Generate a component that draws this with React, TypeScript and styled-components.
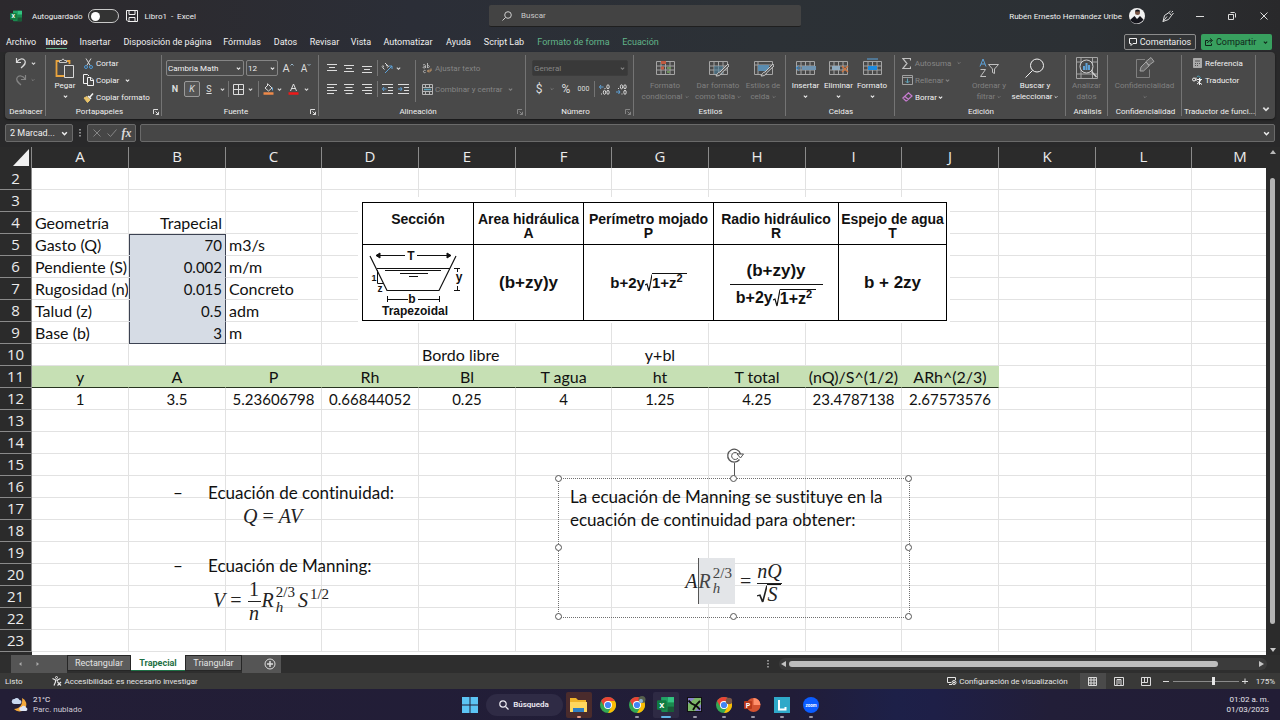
import React from "react";
import styled, { createGlobalStyle, css } from "styled-components";

const UI = `Roboto, "Open Sans", sans-serif`;
const HEADS = `"Open Sans", "Noto Sans", sans-serif`;
const SHEET = `Lato, "Open Sans", sans-serif`;
const MATH = `"Liberation Serif", serif`;
const PICTURE = `"Liberation Sans", Arial, sans-serif`;

const Global = createGlobalStyle`
  * { box-sizing: border-box; }
  body { margin: 0; background: #2b2b2b; font-family: ${UI}; font-size: 8px; color: #f0f0f0; overflow: hidden; }
  button, input, select { font: inherit; color: inherit; margin: 0; padding: 0; border: 0; background: none; }
  button { cursor: pointer; white-space: nowrap; }
  svg { display: block; flex: none; }
`;

/* ---------- shared pieces ---------- */

const Shell = styled.div`
  display: flex;
  flex-direction: column;
  height: 100vh;
`;

type SvgProps = { w: number; h: number; box?: string; children: React.ReactNode };
const Svg = ({ w, h, box, children }: SvgProps) => (
  <svg width={w} height={h} viewBox={box ?? `0 0 ${w} ${h}`} fill="none" stroke="currentColor" strokeWidth="1" aria-hidden="true">
    {children}
  </svg>
);

const Chevron = ({ size = 5 }: { size?: number }) => (
  <svg width={size} height={size} viewBox="0 0 6 6" fill="none" stroke="currentColor" strokeWidth="1.3" aria-hidden="true">
    <path d="M1 2l2 2 2-2" />
  </svg>
);

const IconButton = styled.button<{ $w: number; $h?: number; $boxed?: boolean; $dim?: boolean }>`
  display: flex;
  align-items: center;
  justify-content: center;
  flex: none;
  width: ${(p) => p.$w}px;
  height: ${(p) => p.$h ?? 16}px;
  color: ${(p) => (p.$dim ? "#858585" : "#dcdcdc")};
  ${(p) => p.$boxed && css`border: 1px solid #9a9a9a; border-radius: 2px; background: #555;`}
`;

/* ---------- title bar ---------- */

const TopArea = styled.header`
  flex: none;
  background: linear-gradient(90deg, #2c292d 0%, #2c2b30 14%, #2b2e37 32%, #2c3136 60%, #2c3034 85%, #29292b 100%);
`;

const TitleBar = styled.div`
  display: grid;
  grid-template-columns: 1fr 312px 1fr;
  align-items: center;
  height: 32px;
  padding-left: 10px;
`;

const TitleLeft = styled.div`
  display: flex;
  align-items: center;
`;

const AutoSave = styled.label`
  display: flex;
  align-items: center;
  gap: 5px;
  margin: 0 7px 0 10px;
`;

const Toggle = styled.input`
  appearance: none;
  width: 31px;
  height: 14px;
  border: 1px solid #c8c8c8;
  border-radius: 7px;
  background: #333;
  display: flex;
  align-items: center;
  padding: 0 2px;
  &::before {
    content: "";
    width: 9px;
    height: 9px;
    border-radius: 50%;
    background: #fff;
  }
`;

const DocName = styled.span`
  margin-left: 7px;
`;

const SearchBox = styled.label`
  display: flex;
  align-items: center;
  gap: 9px;
  height: 22px;
  padding-left: 13px;
  border-radius: 2px;
  background: #434343;
  border-bottom: 1px solid #1f1f1f;
  color: #cfcfcf;
`;

const SearchInput = styled.input`
  flex: 1;
  outline: 0;
  &::placeholder { color: #c9c9c9; opacity: 1; }
`;

const TitleRight = styled.div`
  display: flex;
  align-items: center;
  justify-content: flex-end;
`;

const WindowButton = styled(IconButton)`
  height: 32px;
`;

/* ---------- ribbon tabs ---------- */

const TabRow = styled.nav`
  display: flex;
  align-items: center;
  height: 20px;
  padding: 0 8px 0 1px;
`;

const RibbonTab = styled.button<{ $w: number; $active?: boolean; $green?: boolean }>`
  position: relative;
  flex: none;
  width: ${(p) => p.$w}px;
  height: 20px;
  padding-bottom: 1px;
  font-size: 9px;
  text-align: center;
  color: ${(p) => (p.$green ? "#62b489" : "#f0f0f0")};
  font-weight: ${(p) => (p.$active ? 700 : 400)};
  &::after {
    content: "";
    position: absolute;
    display: ${(p) => (p.$active ? "block" : "none")};
    left: 5px;
    right: 5px;
    bottom: 3px;
    height: 1px;
    background: #6bb58f;
  }
`;

const Spacer = styled.div`
  flex: 1;
`;

const CommentsButton = styled.button`
  display: flex;
  align-items: center;
  justify-content: center;
  gap: 3px;
  width: 72px;
  height: 16px;
  margin-right: 5px;
  border: 1px solid #8c8c8c;
  border-radius: 2px;
  background: #333537;
  font-size: 9px;
`;

const ShareButton = styled.button`
  display: flex;
  align-items: center;
  justify-content: center;
  gap: 3px;
  width: 71px;
  height: 16px;
  padding-left: 4px;
  border-radius: 2px;
  background: #38a05f;
  color: #10251a;
  font-size: 9px;
`;

/* ---------- ribbon ---------- */

const RibbonBar = styled.section`
  display: flex;
  flex: none;
  height: 67px;
  margin: 0 5px;
  padding: 3px 0;
  border-radius: 4px;
  background: #494949;
  box-shadow: 0 1px 2px #161616;
`;

const RibbonBack = styled.div`
  flex: none;
  padding-bottom: 5px;
  background: #29292a;
`;

const GroupBox = styled.div<{ $w: number }>`
  display: flex;
  flex-direction: column;
  flex: none;
  width: ${(p) => p.$w}px;
  border-right: 1px solid #747474;
`;

const GroupBody = styled.div<{ $pad?: number }>`
  display: flex;
  height: 51px;
  padding-left: ${(p) => p.$pad ?? 0}px;
`;

const GroupLabel = styled.div`
  display: flex;
  align-items: center;
  justify-content: center;
  height: 10px;
  line-height: 10px;
  padding: 1px 0 0 2px;
  white-space: nowrap;
`;

const LabelText = styled.span`
  flex: 1;
  text-align: center;
`;

const Launcher = ({ dim }: { dim?: boolean }) => (
  <IconButton $w={10} $h={10} $dim={dim} aria-label="Más opciones">
    <Svg w={6} h={6}>
      <path d="M.5 5V.5H5M2.5 2.5l3 3M5.5 2.8v2.7H2.8" />
    </Svg>
  </IconButton>
);

const Group = ({ w, label, pad, launcher, children }: { w: number; label: string; pad?: number; launcher?: "on" | "dim"; children: React.ReactNode }) => (
  <GroupBox $w={w}>
    <GroupBody $pad={pad}>{children}</GroupBody>
    <GroupLabel>
      <LabelText>{label}</LabelText>
      {launcher && <Launcher dim={launcher === "dim"} />}
    </GroupLabel>
  </GroupBox>
);

const Stack = styled.div<{ $w?: number; $two?: boolean }>`
  display: flex;
  flex-direction: column;
  flex: none;
  width: ${(p) => (p.$w ? `${p.$w}px` : "auto")};
  gap: ${(p) => (p.$two ? 5 : 1)}px;
  padding-top: ${(p) => (p.$two ? 5 : 0)}px;
`;

const Row = styled.div<{ $gap?: number }>`
  display: flex;
  align-items: center;
  height: 16px;
  gap: ${(p) => p.$gap ?? 0}px;
`;

const Rule = styled.span<{ $h?: number; $m?: number }>`
  flex: none;
  width: 1px;
  height: ${(p) => p.$h ?? 16}px;
  margin: 0 ${(p) => p.$m ?? 2}px;
  background: #747474;
`;

const LineButton = styled.button<{ $dim?: boolean }>`
  display: flex;
  align-items: center;
  height: 16px;
  gap: 1px;
  color: ${(p) => (p.$dim ? "#858585" : "#f2f2f2")};
`;

const IconSlot = styled.span`
  display: flex;
  align-items: center;
  justify-content: center;
  width: 14px;
`;

const BigButton = styled.button<{ $w: number; $dim?: boolean }>`
  display: flex;
  flex-direction: column;
  align-items: center;
  flex: none;
  width: ${(p) => p.$w}px;
  height: 50px;
  padding-top: 2px;
  line-height: 11px;
  color: ${(p) => (p.$dim ? "#808080" : "#f2f2f2")};
`;

const BigIcon = styled.span`
  display: flex;
  align-items: center;
  justify-content: center;
  height: 22px;
  margin-bottom: 1px;
`;

const BigLine = styled.span`
  display: flex;
  align-items: center;
  gap: 2px;
  height: 11px;
`;

const SelectWrap = styled.span<{ $w: number; $dim?: boolean }>`
  position: relative;
  display: flex;
  align-items: center;
  width: ${(p) => p.$w}px;
  height: 16px;
  border: 1px solid ${(p) => (p.$dim ? "#3d3d3d" : "#858585")};
  border-radius: 2px;
  background: ${(p) => (p.$dim ? "#393939" : "#4a4a4a")};
  color: ${(p) => (p.$dim ? "#858585" : "#f2f2f2")};
  svg { position: absolute; right: 2px; pointer-events: none; }
`;

const Select = styled.select`
  appearance: none;
  width: 100%;
  padding-left: 1px;
  outline: 0;
`;

const Glyph = styled.span<{ $size?: number; $bold?: boolean; $italic?: boolean; $under?: boolean; $serif?: boolean }>`
  font-family: ${(p) => (p.$serif ? MATH : "inherit")};
  font-size: ${(p) => p.$size ?? 9}px;
  font-weight: ${(p) => (p.$bold ? 700 : 400)};
  font-style: ${(p) => (p.$italic ? "italic" : "normal")};
  text-decoration: ${(p) => (p.$under ? "underline" : "none")};
`;

const Lines = ({ d }: { d: string }) => (
  <Svg w={10} h={10}>
    <path d={d} />
  </Svg>
);

const TableIcon = ({ children }: { children?: React.ReactNode }) => (
  <Svg w={21} h={20}>
    <path d="M1.500 3.500h18v13h-18zM1.500 8h18M1.500 12h18M6 3.500v13M10.500 3.500v13M15 3.500v13" stroke="#a5a5a5" />
    {children}
  </Svg>
);

/* ---------- formula bar ---------- */

const FormulaRow = styled.div`
  display: flex;
  flex: none;
  gap: 4px;
  height: 23px;
  padding: 0 5px 5px;
  background: #29292a;
`;

const Field = styled.div<{ $w?: number }>`
  display: flex;
  align-items: center;
  flex: ${(p) => (p.$w ? "none" : 1)};
  width: ${(p) => (p.$w ? `${p.$w}px` : "auto")};
  height: 18px;
  padding: 0 4px;
  border: 1px solid #6a6a6a;
  border-radius: 2px;
  background: #464646;
`;

const FieldInput = styled.input`
  flex: 1;
  min-width: 0;
  outline: 0;
  font-size: 9px;
`;

const Dots = styled.span`
  display: flex;
  align-items: center;
  justify-content: center;
  width: 6px;
  height: 18px;
`;

/* ---------- worksheet ---------- */

const SheetArea = styled.main`
  display: flex;
  flex: 1;
  min-height: 0;
  background: #2b2b2b;
`;

const Canvas = styled.div`
  position: relative;
  flex: 1;
  min-width: 0;
  overflow: hidden;
  background: linear-gradient(90deg, #2b2b2b 32px, #fff 32px);
`;

const Grid = styled.table`
  table-layout: fixed;
  border-collapse: separate;
  border-spacing: 0;
  width: 100%;
  min-width: 1289px;
  font-family: ${SHEET};
  font-variant-ligatures: none;
  color: #111;
`;

const ColHead = styled.th`
  height: 21px;
  padding: 0 0 2px;
  border-right: 1px solid #8a8a8a;
  background: #2b2b2b;
  color: #ececec;
  font: 400 15px/19px ${HEADS};
`;

const Corner = styled.td`
  padding: 0;
  border-right: 1px solid #8a8a8a;
  background: #2b2b2b;
  svg { margin: 0 2px 0 auto; }
`;

const RowHead = styled.th`
  height: 22px;
  padding: 0;
  border-right: 1px solid #8a8a8a;
  border-bottom: 1px solid #8a8a8a;
  background: #2b2b2b;
  color: #ececec;
  font: 400 15px/21px ${HEADS};
`;

type CellKind = { $align?: "left" | "center" | "right"; $num?: boolean; $fill?: "blue" | "green"; $top?: boolean; $bottom?: boolean };
const Cell = styled.td<CellKind>`
  height: 22px;
  padding: ${(p) => (p.$num ? "2px" : "0")} 3px 0;
  overflow: hidden;
  white-space: nowrap;
  text-align: ${(p) => p.$align ?? "left"};
  font-size: ${(p) => (p.$num ? 15 : 16)}px;
  line-height: ${(p) => (p.$num ? 19 : 21)}px;
  border-right: 1px solid #e2e2e2;
  border-bottom: 1px solid #e2e2e2;
  ${(p) => p.$fill === "blue" && css`
    background: #d6dce5;
    border-right-color: #3c4252;
    border-bottom-color: ${p.$bottom ? "#3c4252" : "#d6dce5"};
    box-shadow: inset 1px 0 #3c4252${p.$top ? ", inset 0 1px #3c4252" : ""};
  `}
  ${(p) => p.$fill === "green" && css`
    padding: 0;
    background: #c6e0b4;
    border-right-color: #c6e0b4;
    border-bottom-color: #26331f;
  `}
`;

/* ---------- objects floating over the sheet ---------- */

const Floating = styled.div<{ $x: number; $y: number; $w: number }>`
  position: absolute;
  left: ${(p) => p.$x}px;
  top: ${(p) => p.$y}px;
  width: ${(p) => p.$w}px;
`;

const PictureFrame = styled(Floating)`
  padding: 5px 3px 2px 4px;
  background: #fff;
`;

const FormulaTable = styled.table`
  table-layout: fixed;
  width: 100%;
  border-collapse: collapse;
  font: 700 14px/14px ${PICTURE};
  color: #111;
  th, td { border: 1px solid #000; padding: 0; text-align: center; }
  th { height: 42px; padding-top: 9px; vertical-align: top; white-space: nowrap; }
  td { height: 76px; }
`;

const Expr = styled.span<{ $size?: number }>`
  display: inline-flex;
  align-items: center;
  font-size: ${(p) => p.$size ?? 17}px;
  line-height: 20px;
  white-space: nowrap;
`;

const RootArg = styled.span`
  border-top: 1px solid #111;
  padding-right: 4px;
  line-height: 18px;
  sup { font-size: 11px; line-height: 0; }
`;

const Stacked = styled.span`
  display: inline-flex;
  flex-direction: column;
  align-items: center;
  gap: 3px;
  padding-top: 4px;
`;

const StackedBar = styled.span`
  width: 93px;
  height: 1px;
  background: #111;
`;

const Root = ({ h, color = "#111", w = 7 }: { h: number; color?: string; w?: number }) => (
  <svg width={w} height={h} viewBox="0 0 7 18" preserveAspectRatio="none" fill="none" stroke={color} aria-hidden="true">
    <path d="M0 11l2-1 2 7L7 .5" strokeWidth="1.200" />
  </svg>
);

const NoteText = styled.div`
  color: #111;
  font: 400 17px/23px ${SHEET};
  font-variant-ligatures: none;
  white-space: nowrap;
`;

const NoteList = styled.ul`
  margin: 0;
  padding: 0;
  list-style: none;
`;

const NoteItem = styled.li`
  display: grid;
  grid-template-columns: 35px 1fr;
`;

const MathLine = styled.div<{ $indent?: number; $center?: boolean; $h: number }>`
  display: flex;
  align-items: center;
  justify-content: ${(p) => (p.$center ? "center" : "flex-start")};
  height: ${(p) => p.$h}px;
  padding-left: ${(p) => p.$indent ?? 0}px;
  font: italic 400 20px/22px ${MATH};
  color: #222;
  white-space: pre;
`;

const Fraction = styled.span`
  display: inline-flex;
  flex-direction: column;
  align-items: center;
  margin: 0 1px;
`;

const FractionTop = styled.span<{ $upright?: boolean }>`
  border-bottom: 1px solid #222;
  min-width: 13px;
  text-align: center;
  line-height: 24px;
  font-style: ${(p) => (p.$upright ? "normal" : "italic")};
`;

const Script = styled.span`
  display: inline-flex;
  flex-direction: column;
  margin: 0 3px 0 2px;
  font-size: 15px;
  line-height: 15px;
`;

const Upright = styled.span<{ $size?: number }>`
  font-style: normal;
  font-size: ${(p) => p.$size ?? 20}px;
`;

const Equals = styled(Upright)`
  margin: 0 5px;
`;

const Raised = styled.span`
  align-self: flex-start;
  margin-left: 2px;
  padding-top: 10px;
  font-style: normal;
  font-size: 15px;
  line-height: 14px;
`;

const TextBox = styled(Floating)`
  height: 140px;
  padding: 6px 11px;
  border: 1px dotted #6f6f6f;
`;

const Selected = styled.span`
  display: inline-flex;
  align-items: center;
  height: 46px;
  background: #e3e5e8;
  border-left: 1px solid #555;
  color: #444;
`;

const Handle = styled.span<{ $x: string; $y: string }>`
  position: absolute;
  left: ${(p) => p.$x};
  top: ${(p) => p.$y};
  width: 7px;
  height: 7px;
  margin: -4px;
  border: 1px solid #555;
  border-radius: 50%;
  background: #fff;
`;

const Rotator = styled.span`
  position: absolute;
  left: 167px;
  top: -32px;
`;

const VScroll = styled.div`
  display: flex;
  flex-direction: column;
  align-items: center;
  flex: none;
  width: 14px;
  padding: 1px 0;
  color: #b8b8b8;
`;

const VTrack = styled.div`
  flex: 1;
  width: 100%;
  padding: 22px 5px 22px 4px;
`;

const VThumb = styled.div`
  width: 5px;
  height: 100%;
  border-radius: 3px;
  background: #b5b5b5;
`;

/* ---------- sheet tabs ---------- */

const SheetBar = styled.div`
  display: flex;
  flex: none;
  height: 18px;
  padding-left: 11px;
  background: #2e2e2e;
`;

const SheetNav = styled.div<{ $w: number; $end?: boolean }>`
  display: flex;
  align-items: center;
  justify-content: ${(p) => (p.$end ? "flex-end" : "flex-start")};
  width: ${(p) => p.$w}px;
  background: #555;
`;

const SheetTab = styled.button<{ $w: number; $active?: boolean }>`
  width: ${(p) => p.$w}px;
  height: 16px;
  border: 1px solid #262626;
  background: #5c5c5c;
  color: #e4e4e4;
  font-size: 9px;
  ${(p) => p.$active && css`
    background: #fff;
    border: 0;
    border-bottom: 1px solid #1d7044;
    color: #1d7044;
    font-weight: 700;
  `}
`;

const HScroll = styled.div`
  display: flex;
  align-items: center;
  flex: none;
  width: 488px;
  height: 12px;
  margin: 3px 13px 0 8px;
  border-radius: 6px;
  background: #3b3b3b;
  color: #c4c4c4;
`;

const HTrack = styled.div`
  flex: 1;
  padding-right: 39px;
`;

const HThumb = styled.div`
  height: 6px;
  border-radius: 3px;
  background: #bdbdbd;
`;

/* ---------- status bar ---------- */

const StatusBar = styled.footer`
  display: flex;
  align-items: center;
  flex: none;
  height: 16px;
  padding: 0 5px;
  background: #393938;
  color: #e6e6e6;
`;

const StatusItem = styled.button<{ $after?: number }>`
  display: flex;
  align-items: center;
  gap: 2px;
  height: 16px;
  margin-right: ${(p) => p.$after ?? 0}px;
`;

const ViewButton = styled(IconButton)<{ $on?: boolean }>`
  background: ${(p) => (p.$on ? "#4a4a4a" : "transparent")};
`;

const Zoom = styled.input`
  appearance: none;
  width: 66px;
  height: 10px;
  margin: 0 1px;
  background: linear-gradient(#8a8a8a, #8a8a8a) center / 100% 1px no-repeat;
  &::-webkit-slider-thumb {
    appearance: none;
    width: 3px;
    height: 8px;
    background: #e6e6e6;
  }
`;

/* ---------- taskbar ---------- */

const Taskbar = styled.div`
  display: grid;
  grid-template-columns: 1fr auto 1fr;
  align-items: center;
  flex: none;
  height: 31px;
  padding: 0 11px;
  background: linear-gradient(90deg, #231e36 0%, #211d38 62%, #1d2048 70%, #1e1f47 73%, #221e38 82%, #221d35 100%);
`;

const Weather = styled.button`
  display: flex;
  align-items: center;
  gap: 4px;
  text-align: left;
  line-height: 10px;
  color: #cfcbd6;
`;

const Temp = styled.span`
  display: block;
  color: #f0eef4;
`;

const Apps = styled.div`
  display: flex;
  align-items: center;
  gap: 3px;
`;

const AppButton = styled.button<{ $tint?: string; $mark?: string }>`
  position: relative;
  display: flex;
  align-items: center;
  justify-content: center;
  width: 26px;
  height: 26px;
  border-radius: 2px;
  background: ${(p) => p.$tint ?? "transparent"};
  &::after {
    content: "";
    position: absolute;
    bottom: 0;
    width: ${(p) => (p.$mark === "#62b5e5" ? 10 : 4)}px;
    height: 2px;
    border-radius: 1px;
    background: ${(p) => p.$mark ?? "transparent"};
  }
`;

const TaskSearch = styled.button`
  display: flex;
  align-items: center;
  justify-content: center;
  gap: 4px;
  width: 77px;
  height: 22px;
  border-radius: 11px;
  background: #2f2b45;
  font-weight: 600;
  color: #eceaf2;
`;

const Clock = styled.div`
  text-align: right;
  line-height: 10px;
  color: #e6e4ec;
`;

const Tag = styled.text`
  font-family: ${UI};
  font-weight: 700;
  stroke: none;
`;

/* ---------- logos ---------- */

const ExcelLogo = ({ size }: { size: number }) => (
  <svg width={size} height={size} viewBox="0 0 16 16" aria-hidden="true">
    <rect x="4" y="1" width="12" height="14" rx="1" fill="#1b8a4f" />
    <rect x="10" y="1" width="6" height="5" fill="#33c481" />
    <rect x="4" y="1" width="6" height="5" fill="#21a366" />
    <rect x="10" y="10" width="6" height="5" fill="#185c37" />
    <rect x="0" y="4" width="9" height="9" rx="1" fill="#107c41" />
    <Tag x="4.500" y="11.300" fontSize="7.500" textAnchor="middle" fill="#fff">X</Tag>
  </svg>
);

const ChromeLogo = ({ badge }: { badge?: "photo" | "brown" }) => (
  <svg width="18" height="18" viewBox="0 0 18 18" aria-hidden="true">
    <circle cx="9" cy="9" r="8" fill="#34a853" />
    <path d="M9 5h6.930A8 8 0 0 1 9 17l3.500-6z" fill="#fbbc05" />
    <path d="M2.070 5A8 8 0 0 1 15.930 5H9L5.600 11z" fill="#ea4335" />
    <circle cx="9" cy="9" r="4" fill="#fff" />
    <circle cx="9" cy="9" r="3.100" fill="#4285f4" />
    {badge === "photo" && (
      <g>
        <circle cx="14" cy="3.500" r="3.500" fill="#56604c" />
        <circle cx="13" cy="5" r="2" fill="#8fb7dd" />
      </g>
    )}
    {badge === "brown" && <circle cx="14" cy="5" r="3.200" fill="#7a5848" />}
  </svg>
);

/* ---------- data ---------- */

const letters = ["A", "B", "C", "D", "E", "F", "G", "H", "I", "J", "K", "L", "M"];
const widths = [97, 97, 96, 97, 97, 96, 97, 97, 96, 97, 97, 96];

const tabs: { name: string; w: number; kind?: "active" | "green" }[] = [
  { name: "Archivo", w: 40 },
  { name: "Inicio", w: 31, kind: "active" },
  { name: "Insertar", w: 46 },
  { name: "Disposición de página", w: 99 },
  { name: "Fórmulas", w: 50 },
  { name: "Datos", w: 37 },
  { name: "Revisar", w: 41 },
  { name: "Vista", w: 32 },
  { name: "Automatizar", w: 62 },
  { name: "Ayuda", w: 39 },
  { name: "Script Lab", w: 52 },
  { name: "Formato de forma", w: 87, kind: "green" },
  { name: "Ecuación", w: 47, kind: "green" },
];

const inputs: Record<number, [string, string, string]> = {
  4: ["Geometría", "Trapecial", ""],
  5: ["Gasto (Q)", "70", "m3/s"],
  6: ["Pendiente (S)", "0.002", "m/m"],
  7: ["Rugosidad (n)", "0.015", "Concreto"],
  8: ["Talud (z)", "0.5", "adm"],
  9: ["Base (b)", "3", "m"],
};
const headings = ["y", "A", "P", "Rh", "Bl", "T agua", "ht", "T total", "(nQ)/S^(1/2)", "ARh^(2/3)"];
const results = ["1", "3.5", "5.23606798", "0.66844052", "0.25", "4", "1.25", "4.25", "23.4787138", "2.67573576"];

const renderCell = (row: number, col: number) => {
  if (row === 11 && col < 10) return <Cell key={col} $fill="green" $align="center">{headings[col]}</Cell>;
  if (row === 12 && col < 10) return <Cell key={col} $num $align="center">{results[col]}</Cell>;
  if (row === 10 && col === 4) return <Cell key={col}>Bordo libre</Cell>;
  if (row === 10 && col === 6) return <Cell key={col} $align="center">y+bl</Cell>;
  const data = inputs[row];
  if (data && col < 3) {
    if (col === 1)
      return (
        <Cell key={col} $align="right" $num={row > 4} $fill={row > 4 ? "blue" : undefined} $top={row === 5} $bottom={row === 9}>
          {data[1]}
        </Cell>
      );
    return <Cell key={col}>{data[col]}</Cell>;
  }
  return <Cell key={col} />;
};

/* ---------- sections ---------- */

const Ribbon = () => (
  <RibbonBack>
    <RibbonBar>
      <Group w={41} label="Deshacer" pad={8}>
        <Stack>
          <Row>
            <IconButton $w={16} aria-label="Deshacer">
              <Svg w={12} h={12}><path d="M1.500 1v4.500H6M1.800 5.200C4 1.500 8 1 9.800 3.500S9.500 8 6 11" strokeWidth="1.200" /></Svg>
            </IconButton>
            <IconButton $w={8} aria-label="Opciones de deshacer"><Chevron /></IconButton>
          </Row>
          <Row>
            <IconButton $w={16} $dim aria-label="Rehacer">
              <Svg w={12} h={12}><path d="M10.500 1v4.500H6M10.200 5.200C8 1.500 4 1 2.200 3.500S2.500 8 6 11" strokeWidth="1.200" /></Svg>
            </IconButton>
            <IconButton $w={8} $dim aria-label="Opciones de rehacer"><Chevron size={4} /></IconButton>
          </Row>
        </Stack>
      </Group>

      <Group w={116} label="Portapapeles" pad={3} launcher="on">
        <BigButton $w={32}>
          <BigIcon>
            <Svg w={20} h={21}>
              <path d="M4 3H1.500v15H9M12 3h2.500v3" stroke="#e8a33d" strokeWidth="1.800" />
              <path d="M4.500 4.500v-2h2L8 .8l1.500 1.700h2v2z" stroke="#c8c8c8" />
              <path d="M9.500 7.500h9v12h-9z" stroke="#d8d8d8" fill="#4a4a4a" />
            </Svg>
          </BigIcon>
          <BigLine>Pegar</BigLine>
          <BigLine><Chevron /></BigLine>
        </BigButton>
        <Stack>
          <LineButton>
            <IconSlot>
              <Svg w={9} h={11}>
                <path d="M2 .5l4.200 7M7 .5L2.800 7.500" stroke="#d8d8d8" />
                <circle cx="2" cy="9" r="1.500" stroke="#4f9ad6" />
                <circle cx="7" cy="9" r="1.500" stroke="#4f9ad6" />
              </Svg>
            </IconSlot>
            Cortar
          </LineButton>
          <LineButton>
            <IconSlot>
              <Svg w={11} h={12}>
                <path d="M5 9.500H.5v-9h4l1.500 1.500M4.500 3.500h3.500l2.500 2.500v5.500h-6zM7.500 3.500v3h3" />
              </Svg>
            </IconSlot>
            Copiar
            <IconSlot><Chevron /></IconSlot>
          </LineButton>
          <LineButton>
            <IconSlot>
              <Svg w={11} h={11}>
                <path d="M1 6l3-1.500L7 8l-2.500 2.500z" fill="#e9c46a" stroke="#e9c46a" />
                <path d="M5 4l3 3M6.500 5.500l3.500-4" strokeWidth="1.500" />
              </Svg>
            </IconSlot>
            Copiar formato
          </LineButton>
        </Stack>
      </Group>

      <Group w={157} label="Fuente" pad={4} launcher="on">
        <Stack $two>
          <Row $gap={2}>
            <SelectWrap $w={78}>
              <Select aria-label="Fuente" defaultValue="Cambria Math"><option>Cambria Math</option></Select>
              <Chevron />
            </SelectWrap>
            <SelectWrap $w={32}>
              <Select aria-label="Tamaño de fuente" defaultValue="12"><option>12</option></Select>
              <Chevron />
            </SelectWrap>
            <IconButton $w={16} aria-label="Aumentar tamaño">
              <Glyph $size={11}>A</Glyph>
              <Svg w={4} h={10}><path d="M.5 2.500l1.500-1.500 1.500 1.500" stroke="#9ab8cc" /></Svg>
            </IconButton>
            <IconButton $w={16} aria-label="Reducir tamaño">
              <Glyph $size={10}>A</Glyph>
              <Svg w={4} h={10}><path d="M.5 1l1.500 1.500L3.500 1" stroke="#9ab8cc" /></Svg>
            </IconButton>
          </Row>
          <Row>
            <IconButton $w={18} aria-label="Negrita"><Glyph $bold>N</Glyph></IconButton>
            <IconButton $w={16} $boxed aria-label="Cursiva"><Glyph $italic>K</Glyph></IconButton>
            <IconButton $w={18} aria-label="Subrayado"><Glyph $under>S</Glyph></IconButton>
            <IconButton $w={8} aria-label="Tipos de subrayado"><Chevron /></IconButton>
            <Rule />
            <IconButton $w={14} aria-label="Bordes">
              <Svg w={11} h={11}><path d="M.5.5h10v10H.5zM5.500.5v10M.5 5.500h10" /></Svg>
            </IconButton>
            <IconButton $w={11} aria-label="Tipos de borde"><Chevron /></IconButton>
            <Rule />
            <IconButton $w={14} aria-label="Color de relleno">
              <Svg w={11} h={12}>
                <path d="M2 5l3.500-3.500L9 5 5.500 8z M4.500 2.500V.5" />
                <path d="M9.500 4.500v3" stroke="#6aa8d8" />
                <path d="M.5 10.500h10" stroke="#ef8a4a" strokeWidth="2.500" />
              </Svg>
            </IconButton>
            <IconButton $w={9} aria-label="Colores de relleno"><Chevron /></IconButton>
            <IconButton $w={18} aria-label="Color de fuente">
              <Svg w={11} h={12}>
                <path d="M2.500 8L5.500 1l3 7M3.500 5.500h4" />
                <path d="M.5 10.500h10" stroke="#f01818" strokeWidth="2.500" />
              </Svg>
            </IconButton>
            <IconButton $w={8} aria-label="Colores de fuente"><Chevron /></IconButton>
          </Row>
        </Stack>
      </Group>

      <Group w={207} label="Alineación" pad={4} launcher="dim">
        <Stack $two $w={88}>
          <Row>
            <IconButton $w={17} aria-label="Alinear arriba"><Lines d="M0 1.500h10M2 4.500h6M0 7.500h10" /></IconButton>
            <IconButton $w={18} aria-label="Alinear en el medio"><Lines d="M0 2.500h10M2 5.500h6M0 8.500h10" /></IconButton>
            <IconButton $w={17} aria-label="Alinear abajo"><Lines d="M0 3.500h10M2 6.500h6M0 9.500h10" /></IconButton>
            <Rule />
            <IconButton $w={14} aria-label="Orientación">
              <Svg w={12} h={12}>
                <path d="M4 11l7-7M8 4h3v3" stroke="#5fa2d8" />
                <path d="M1.500 5.500l2 2M1 4.500c1-1.500 2-.5 1 1M4 1l3.500 3.500M5 4c1.500-1.500 3 0 1.500 1.500" />
              </Svg>
            </IconButton>
            <IconButton $w={8} aria-label="Opciones de orientación"><Chevron /></IconButton>
          </Row>
          <Row>
            <IconButton $w={17} aria-label="Alinear a la izquierda"><Lines d="M0 .5h10M0 3.500h7M0 6.500h10M0 9.500h7" /></IconButton>
            <IconButton $w={18} aria-label="Centrar"><Lines d="M0 .5h10M1.500 3.500h7M0 6.500h10M1.500 9.500h7" /></IconButton>
            <IconButton $w={17} aria-label="Alinear a la derecha"><Lines d="M0 .5h10M3 3.500h7M0 6.500h10M3 9.500h7" /></IconButton>
            <Rule />
            <IconButton $w={15} aria-label="Disminuir sangría">
              <Svg w={11} h={10}><path d="M0 .5h11M6 3.500h5M6 6.500h5M0 9.500h11" /><path d="M4.500 5H.5M2 3L.5 5 2 7" stroke="#5fa2d8" /></Svg>
            </IconButton>
            <IconButton $w={16} aria-label="Aumentar sangría">
              <Svg w={11} h={10}><path d="M0 .5h11M6 3.500h5M6 6.500h5M0 9.500h11" /><path d="M0 5h4M2.500 3L4 5 2.500 7" stroke="#5fa2d8" /></Svg>
            </IconButton>
          </Row>
        </Stack>
        <Stack $two><Rule $h={42} $m={4} /></Stack>
        <Stack $two>
          <LineButton $dim>
            <IconSlot>
              <Svg w={10} h={11}>
                <path d="M1 2c1.500-.8 2.500-.3 2.500.8V5M3.500 3.500c-3 0-3 1.700-1.200 1.500L3.500 4.300M5.500 0v5M5.500 2.800c2-1.200 3 2.200 0 1.800M3.500 7.500C1 6.500.5 10.500 3.500 9.500" stroke="#b5b5b5" />
                <path d="M9 5.500v2.500H5.500M7 6.500L5.500 8 7 9.500" stroke="#c99a6a" />
              </Svg>
            </IconSlot>
            Ajustar texto
          </LineButton>
          <LineButton $dim>
            <IconSlot>
              <Svg w={11} h={11}>
                <path d="M.5.5h10v10H.5zM.5 3.500h10M.5 7.500h10M3.500.5v3M7.500.5v3M3.500 7.500v3M7.500 7.500v3" stroke="#b5b5b5" />
                <path d="M2 5.500h7" stroke="#5fa2b8" strokeWidth="1.500" />
              </Svg>
            </IconSlot>
            Combinar y centrar
            <IconSlot><Chevron /></IconSlot>
          </LineButton>
        </Stack>
      </Group>

      <Group w={108} label="Número" pad={6} launcher="dim">
        <Stack $two>
          <SelectWrap $w={96} $dim>
            <Select aria-label="Formato de número" defaultValue="General"><option>General</option></Select>
            <Chevron />
          </SelectWrap>
          <Row>
            <IconButton $w={14} aria-label="Moneda"><Glyph $size={12}>$</Glyph></IconButton>
            <IconButton $w={11} $dim aria-label="Opciones de moneda"><Chevron size={4} /></IconButton>
            <IconButton $w={18} aria-label="Porcentaje"><Glyph $size={12}>%</Glyph></IconButton>
            <IconButton $w={17} aria-label="Estilo millares"><Glyph $size={7}>000</Glyph></IconButton>
            <Rule />
            <IconButton $w={14} aria-label="Aumentar decimales">
              <Svg w={11} h={11}>
                <path d="M4.500 3H.5M2 1L.5 3 2 5" stroke="#5fa2d8" />
                <path d="M6 4v1M2.500 9.500v1" />
                <ellipse cx="9" cy="2.800" rx="1.200" ry="2" />
                <ellipse cx="5.500" cy="8.300" rx="1.200" ry="2" />
                <ellipse cx="9" cy="8.300" rx="1.200" ry="2" />
              </Svg>
            </IconButton>
            <IconButton $w={20} aria-label="Disminuir decimales">
              <Svg w={11} h={11}>
                <path d="M2.500 4v1M6 9.500v1" />
                <ellipse cx="5.500" cy="2.800" rx="1.200" ry="2" />
                <ellipse cx="9" cy="2.800" rx="1.200" ry="2" />
                <ellipse cx="9" cy="8.300" rx="1.200" ry="2" />
                <path d="M0 8h4M2.500 6L4 8l-1.500 2" stroke="#5fa2d8" />
              </Svg>
            </IconButton>
          </Row>
        </Stack>
      </Group>

      <Group w={152} label="Estilos" pad={4}>
        <BigButton $w={54} $dim>
          <BigIcon>
            <TableIcon>
              <path d="M6 4.500h5M6 10h3" stroke="#c05a40" strokeWidth="3" />
              <path d="M12 10h4M12 14h3" stroke="#6d8f5c" strokeWidth="2" />
            </TableIcon>
          </BigIcon>
          <BigLine>Formato</BigLine>
          <BigLine>condicional <Chevron size={4} /></BigLine>
        </BigButton>
        <BigButton $w={52} $dim>
          <BigIcon>
            <TableIcon>
              <path d="M6 8h9v8H6z" fill="#4c7f99" stroke="none" opacity=".6" />
              <path d="M20 6l-8 8c-2 0-3 2-4 4 3 0 5-1 5.500-3L21 8z" fill="#555" stroke="#c8c8c8" />
            </TableIcon>
          </BigIcon>
          <BigLine>Dar formato</BigLine>
          <BigLine>como tabla <Chevron size={4} /></BigLine>
        </BigButton>
        <BigButton $w={38} $dim>
          <BigIcon>
            <Svg w={21} h={20}>
              <path d="M1.500 3.500h18v13h-18zM1.500 7h18M5 3.500v13" stroke="#a5a5a5" />
              <path d="M5 7h11v6H5z" fill="#5a8cb0" stroke="none" />
              <path d="M20 6l-8 8c-2 0-3 2-4 4 3 0 5-1 5.500-3L21 8z" fill="#555" stroke="#c8c8c8" />
            </Svg>
          </BigIcon>
          <BigLine>Estilos de</BigLine>
          <BigLine>celda <Chevron size={4} /></BigLine>
        </BigButton>
      </Group>

      <Group w={109} label="Celdas" pad={3}>
        <BigButton $w={33}>
          <BigIcon>
            <TableIcon>
              <path d="M7 8h14v4H7z" fill="#6f93b0" stroke="none" />
              <path d="M6 10H1M3.500 7.500L1 10l2.500 2.500" stroke="#4e9ad8" />
            </TableIcon>
          </BigIcon>
          <BigLine>Insertar</BigLine>
          <BigLine><Chevron /></BigLine>
        </BigButton>
        <BigButton $w={33}>
          <BigIcon>
            <TableIcon>
              <path d="M4 8h8v4H4z" fill="#8fabc0" stroke="none" />
              <path d="M14 8l6 6M20 8l-6 6" stroke="#d0753f" strokeWidth="1.300" />
            </TableIcon>
          </BigIcon>
          <BigLine>Eliminar</BigLine>
          <BigLine><Chevron /></BigLine>
        </BigButton>
        <BigButton $w={34}>
          <BigIcon>
            <TableIcon>
              <path d="M6 8h9v4H6z" fill="#1d8be0" stroke="none" />
              <path d="M5 1h11" stroke="#5aa5df" />
            </TableIcon>
          </BigIcon>
          <BigLine>Formato</BigLine>
          <BigLine><Chevron /></BigLine>
        </BigButton>
      </Group>

      <Group w={171} label="Edición" pad={5}>
        <Stack $w={66}>
          <LineButton $dim>
            <IconSlot><Svg w={9} h={11}><path d="M8.500 2.500v-2H.8L5 5.500.8 10.500h7.700v-2" stroke="#c0c0c0" strokeWidth="1.200" /></Svg></IconSlot>
            Autosuma
            <IconSlot><Chevron size={4} /></IconSlot>
          </LineButton>
          <LineButton $dim>
            <IconSlot><Svg w={11} h={10}><path d="M.5.5h10v9H.5zM.5 2.500h10" stroke="#a0a0a0" /><path d="M5.500 3.500v4.500M3.500 6l2 2 2-2" stroke="#5fa2b8" /></Svg></IconSlot>
            Rellenar
            <Chevron />
          </LineButton>
          <LineButton>
            <IconSlot><Svg w={11} h={10}><path d="M4 9L.8 6 6.500.8 10 4 4.500 9zM2.800 4.200L6.500 7.500" stroke="#c77bd0" strokeWidth="1.200" /></Svg></IconSlot>
            Borrar
            <Chevron />
          </LineButton>
        </Stack>
        <BigButton $w={46} $dim>
          <BigIcon>
            <Svg w={20} h={20}>
              <path d="M1 8.500l3-7.500 3 7.500M2 6h4" stroke="#5fa2d8" />
              <path d="M1.500 11.500h5l-5 7h5.500" stroke="#c0c0c0" />
              <path d="M9.500 6.500h10l-4 4.500v4.500l-2-1V11z" stroke="#c0c0c0" />
            </Svg>
          </BigIcon>
          <BigLine>Ordenar y</BigLine>
          <BigLine>filtrar <Chevron size={4} /></BigLine>
        </BigButton>
        <BigButton $w={46}>
          <BigIcon><Svg w={20} h={20}><circle cx="12" cy="7.500" r="6.500" /><path d="M7.500 12.500L.5 19.500" /></Svg></BigIcon>
          <BigLine>Buscar y</BigLine>
          <BigLine>seleccionar <Chevron size={4} /></BigLine>
        </BigButton>
      </Group>

      <Group w={42} label="Análisis">
        <BigButton $w={41} $dim>
          <BigIcon>
            <Svg w={22} h={22}>
              <path d="M.5.5h21v21H.5zM.5 5h21M.5 17h21M5 .5v21M16.500.5v21" stroke="#a5a5a5" />
              <circle cx="10.500" cy="9.500" r="6.500" fill="#4a4a4a" stroke="#d0d0d0" />
              <path d="M8 13V9M10.500 13V6M13 13V8" stroke="#5fa2d8" strokeWidth="2" />
              <path d="M15.500 14.500l5 5.500" stroke="#d0d0d0" strokeWidth="1.500" />
            </Svg>
          </BigIcon>
          <BigLine>Analizar</BigLine>
          <BigLine>datos</BigLine>
        </BigButton>
      </Group>

      <Group w={74} label="Confidencialidad">
        <BigButton $w={73} $dim>
          <BigIcon>
            <Svg w={20} h={22}>
              <path d="M10 2.500H1.500v18h13v-8" />
              <path d="M11 4.500l5-4 3 4-5.500 4zM6 10l5-5 3.500 3.500-6 5.500H5z" stroke="#a5a5a5" fill="#666" />
            </Svg>
          </BigIcon>
          <BigLine>Confidencialidad</BigLine>
          <BigLine><Chevron size={4} /></BigLine>
        </BigButton>
      </Group>

      <Group w={74} label="Traductor de funci..." pad={8}>
        <Stack>
          <LineButton>
            <IconSlot><Svg w={9} h={10}><path d="M.5.5h8v9h-8z" fill="#aaa" stroke="#aaa" /><path d="M2 3h5M2 5.500h1M4 5.500h1M6 5.500h1M2 7.500h1M4 7.500h1" stroke="#555" /></Svg></IconSlot>
            Referencia
          </LineButton>
          <LineButton>
            <IconSlot>
              <Svg w={11} h={11}>
                <circle cx="2" cy="4.500" r="1.500" />
                <path d="M4 2.500V6" />
                <path d="M5 1.500c2-1 3 0 3.500 2" stroke="#4aa0b8" />
                <path d="M5 4.500h5M7.500 3v7M5 9c2-1 3-2.500 4-4.500M5.500 6.500l4.500 3" />
              </Svg>
            </IconSlot>
            Traductor
          </LineButton>
        </Stack>
      </Group>
      <Spacer />
      <Stack>
        <Spacer />
        <IconButton $w={20} $h={14} aria-label="Contraer cinta"><Chevron size={8} /></IconButton>
      </Stack>
    </RibbonBar>
  </RibbonBack>
);

const TrapezoidFigure = () => (
  <svg width="108" height="74" viewBox="363 245 108 74" fill="none" stroke="#111" role="img" aria-label="Sección trapezoidal">
    <path d="M370 255l17 34.500h52L456 255M377 267.500h73M385 269.500h56M400 272.500h28M409 275.500h9" strokeWidth="1.200" />
    <path d="M376 254.500h29M417 254.500h34M377.500 269v13.500h6" />
    <path d="M380 252l-4 2.500 4 2.500zM447 252l4 2.500-4 2.500z" fill="#111" />
    <path d="M454 267.500h6M457.500 268v3M454 289.500h6M457.500 285v4M387 298.500h21M418 298.500h21M387.500 295v6M439.500 295v6" />
    <g fill="#111" stroke="none" fontFamily="Liberation Sans" fontWeight="700" fontSize="12" textAnchor="middle">
      <text x="411" y="259">T</text>
      <text x="459" y="280">y</text>
      <text x="374" y="280" fontSize="9">1</text>
      <text x="380" y="291" fontSize="10">z</text>
      <text x="412" y="302">b</text>
      <text x="415" y="314">Trapezoidal</text>
    </g>
  </svg>
);

const Worksheet = () => (
  <SheetArea>
    <Canvas>
      <Grid>
        <colgroup>
          <col width={32} />
          {widths.map((w, i) => <col key={i} width={w} />)}
          <col />
        </colgroup>
        <thead>
          <tr>
            <Corner><svg width="16" height="17" viewBox="0 0 16 17" aria-hidden="true"><path d="M16 0v17H0z" fill="#f0f0f0" /></svg></Corner>
            {letters.map((l) => <ColHead key={l} scope="col">{l}</ColHead>)}
          </tr>
        </thead>
        <tbody>
          {Array.from({ length: 22 }, (_, i) => i + 2).map((row) => (
            <tr key={row}>
              <RowHead scope="row">{row}</RowHead>
              {letters.map((_, col) => renderCell(row, col))}
            </tr>
          ))}
        </tbody>
      </Grid>

      <PictureFrame $x={358} $y={50} $w={592}>
        <FormulaTable>
          <colgroup><col width={111} /><col width={110} /><col width={130} /><col width={125} /><col /></colgroup>
          <thead>
            <tr>
              <th>Sección</th>
              <th>Area hidráulica<br />A</th>
              <th>Perímetro mojado<br />P</th>
              <th>Radio hidráulico<br />R</th>
              <th>Espejo de agua<br />T</th>
            </tr>
          </thead>
          <tbody>
            <tr>
              <td><TrapezoidFigure /></td>
              <td><Expr>(b+zy)y</Expr></td>
              <td><Expr $size={15}>b+2y<Root h={18} /><RootArg>1+z<sup>2</sup></RootArg></Expr></td>
              <td>
                <Stacked>
                  <Expr>(b+zy)y</Expr>
                  <StackedBar />
                  <Expr $size={16}>b+2y<Root h={18} /><RootArg>1+z<sup>2</sup></RootArg></Expr>
                </Stacked>
              </td>
              <td><Expr>b + 2zy</Expr></td>
            </tr>
          </tbody>
        </FormulaTable>
      </PictureFrame>

      <Floating $x={173} $y={334} $w={240}>
        <NoteText>
          <NoteList>
            <NoteItem><span>–</span><span>Ecuación de continuidad:</span></NoteItem>
          </NoteList>
          <MathLine $h={23} $indent={70}>Q<Equals>=</Equals>AV</MathLine>
          <MathLine $h={27}> </MathLine>
          <NoteList>
            <NoteItem><span>–</span><span>Ecuación de Manning:</span></NoteItem>
          </NoteList>
          <MathLine $h={46} $indent={40}>
            V<Equals>=</Equals>
            <Fraction><FractionTop $upright>1</FractionTop>n</Fraction>
            R<Script><Upright $size={15}>2/3</Upright><span>h</span></Script>
            S<Raised>1/2</Raised>
          </MathLine>
        </NoteText>
      </Floating>

      <TextBox $x={558} $y={331} $w={352}>
        <NoteText>
          La ecuación de Manning se sustituye en la<br />
          ecuación de continuidad para obtener:
        </NoteText>
        <MathLine $h={27}> </MathLine>
        <MathLine $h={46} $center>
          A
          <Selected>R<Script><Upright $size={15}>2/3</Upright><span>h</span></Script></Selected>
          <Equals>=</Equals>
          <Fraction>
            <FractionTop>nQ</FractionTop>
            <Expr $size={20}><Root h={18} w={10} color="#222" /><RootArg>S</RootArg></Expr>
          </Fraction>
        </MathLine>
        <Rotator>
          <svg width="18" height="32" viewBox="0 0 18 32" fill="none" stroke="#555" aria-hidden="true">
            <path d="M8.500 16v13" />
            <path d="M13.500 12.500A6.500 6.500 0 1 1 14.500 7" strokeWidth="1.300" />
            <path d="M12 11a3.500 3.500 0 1 1 .5-3" />
            <path d="M11 7h6.500L14.500 11z" fill="#fff" />
          </svg>
        </Rotator>
        {["0%", "50%", "100%"].flatMap((x) =>
          ["0%", "50%", "100%"].filter((y) => x !== "50%" || y !== "50%").map((y) => <Handle key={x + y} $x={x} $y={y} />)
        )}
      </TextBox>
    </Canvas>
    <VScroll>
      <Svg w={8} h={8}><path d="M4 2l3 4H1z" fill="#b8b8b8" stroke="none" /></Svg>
      <VTrack><VThumb /></VTrack>
      <Svg w={8} h={8}><path d="M4 6l3-4H1z" fill="#c8c8c8" stroke="none" /></Svg>
    </VScroll>
  </SheetArea>
);

const Bottom = () => (
  <>
    <SheetBar>
      <SheetNav $w={56}>
        <IconButton $w={18} aria-label="Hoja anterior"><Svg w={4} h={6}><path d="M3.500 1L1 3l2.500 2z" fill="#aaa" stroke="none" /></Svg></IconButton>
        <IconButton $w={18} aria-label="Hoja siguiente"><Svg w={4} h={6}><path d="M.5 1L3 3 .5 5z" fill="#aaa" stroke="none" /></Svg></IconButton>
      </SheetNav>
      <SheetTab $w={64}>Rectangular</SheetTab>
      <SheetTab $w={54} $active>Trapecial</SheetTab>
      <SheetTab $w={57}>Triangular</SheetTab>
      <SheetNav $w={39} $end>
        <IconButton $w={22} aria-label="Hoja nueva"><Svg w={12} h={12}><circle cx="6" cy="6" r="5" /><path d="M6 3v6M3 6h6" strokeWidth="1.500" /></Svg></IconButton>
      </SheetNav>
      <Spacer />
      <Dots><Svg w={2} h={8}><path d="M1 0v8" strokeDasharray="1.500 1.500" /></Svg></Dots>
      <HScroll>
        <Svg w={10} h={8}><path d="M7 1v6L2 4z" fill="#c4c4c4" stroke="none" /></Svg>
        <HTrack><HThumb /></HTrack>
        <Svg w={10} h={8}><path d="M2 1v6l5-3z" fill="#c4c4c4" stroke="none" /></Svg>
      </HScroll>
    </SheetBar>

    <StatusBar>
      <StatusItem $after={30}>Listo</StatusItem>
      <StatusItem>
        <Svg w={10} h={10}>
          <circle cx="4.500" cy="1.500" r="1" />
          <path d="M.5 2.500l3 1.500h2l3-1.500M3.500 4v2L2 9.500M5.500 4v1.500M5.500 6l3.500 3.500M9 6L5.500 9.500" strokeWidth="1.200" />
        </Svg>
        Accesibilidad: es necesario investigar
      </StatusItem>
      <Spacer />
      <StatusItem $after={12}>
        <Svg w={10} h={10}><path d="M4 6.500H.5v-5h8V4M2 8.500h3" /><circle cx="7" cy="6.500" r="2" /><path d="M7 5.500v2M6 6.500h2" /></Svg>
        Configuración de visualización
      </StatusItem>
      <ViewButton $w={26} $on aria-label="Normal"><Svg w={9} h={9}><path d="M.5.5h8v8h-8zM.5 3h8M.5 6h8M3 .5v8M6 .5v8" /></Svg></ViewButton>
      <ViewButton $w={27} aria-label="Diseño de página"><Svg w={10} h={9}><path d="M.5.5h9v8h-9zM3 2.500h4v6H3zM4 4h2M4 6h2" /></Svg></ViewButton>
      <ViewButton $w={27} aria-label="Vista previa de salto de página"><Svg w={10} h={9}><path d="M.5.5h9v8h-9zM3.500.5v5M6.500.5v5M.5 5.500h6" /></Svg></ViewButton>
      <IconButton $w={12} aria-label="Alejar"><Svg w={6} h={6}><path d="M0 3.500h6" /></Svg></IconButton>
      <Zoom type="range" min={10} max={400} defaultValue={252} aria-label="Zoom" />
      <StatusItem as="span" $after={6}>
        <IconButton $w={10} aria-label="Acercar"><Svg w={6} h={6}><path d="M0 3.500h6M3 .5v6" /></Svg></IconButton>
      </StatusItem>
      <StatusItem>175%</StatusItem>
    </StatusBar>

    <Taskbar>
      <Weather>
        <svg width="18" height="18" viewBox="0 0 18 18" aria-hidden="true">
          <path d="M11 2a7 7 0 1 1-8 11c6 0 9-5 8-11z" fill="#f3a83a" />
          <path d="M3 8a2.500 2.500 0 0 1 .5-5 3 3 0 0 1 5 1 2 2 0 0 1 0 4z" fill="#c9d8f0" />
          <path d="M10 15a2 2 0 0 1 .5-4 2.500 2.500 0 0 1 4.500.5 1.800 1.800 0 0 1 0 3.500z" fill="#dfe6f5" />
        </svg>
        <span><Temp>21°C</Temp>Parc. nublado</span>
      </Weather>
      <Apps>
        <AppButton aria-label="Inicio">
          <svg width="16" height="16" viewBox="0 0 16 16" aria-hidden="true"><path d="M0 0h7.500v7.500H0zM8.500 0H16v7.500H8.500zM0 8.500h7.500V16H0zM8.500 8.500H16V16H8.500z" fill="#5cc4f4" /></svg>
        </AppButton>
        <TaskSearch>
          <Svg w={10} h={10}><circle cx="4" cy="4" r="3.200" strokeWidth="1.200" /><path d="M6.500 6.500L9.500 9.500" strokeWidth="1.300" /></Svg>
          Búsqueda
        </TaskSearch>
        <AppButton $tint="#4a2b2c" $mark="#e8a08a" aria-label="Explorador">
          <svg width="17" height="16" viewBox="0 0 17 16" aria-hidden="true">
            <path d="M0 1h6l2 2h8v12H0z" fill="#f0b429" /><path d="M0 5h17v10H0z" fill="#ffd75e" /><path d="M3 11h11v4H3z" fill="#2f7fc4" />
          </svg>
        </AppButton>
        <AppButton aria-label="Chrome"><ChromeLogo /></AppButton>
        <AppButton $mark="#9a98a8" aria-label="Chrome, perfil 1"><ChromeLogo badge="photo" /></AppButton>
        <AppButton $tint="#2e2a44" $mark="#62b5e5" aria-label="Excel"><ExcelLogo size={17} /></AppButton>
        <AppButton $mark="#9a98a8" aria-label="Editor">
          <svg width="15" height="15" viewBox="0 0 15 15" aria-hidden="true">
            <rect x=".5" y=".5" width="14" height="14" fill="#7cb868" stroke="#111" />
            <path d="M1 1h7L1 7zM8 14h6V7z" fill="#8a80cc" />
            <path d="M1.500 3.500l3 3 5 2.500 3.500 3.500M13 4l-4 4-3 5" stroke="#0c0c0c" strokeWidth="1.800" fill="none" />
          </svg>
        </AppButton>
        <AppButton $mark="#9a98a8" aria-label="Chrome, perfil 2"><ChromeLogo badge="brown" /></AppButton>
        <AppButton $mark="#9a98a8" aria-label="PowerPoint">
          <svg width="17" height="16" viewBox="0 0 17 16" aria-hidden="true">
            <circle cx="9.500" cy="8" r="7" fill="#d35230" /><path d="M9.500 1a7 7 0 0 1 7 7h-7z" fill="#ff8f6b" />
            <rect x="0" y="4" width="8" height="8" rx="1" fill="#b7381a" />
            <Tag x="4" y="10.500" fontSize="7" textAnchor="middle" fill="#fff">P</Tag>
          </svg>
        </AppButton>
        <AppButton $mark="#9a98a8" aria-label="L">
          <svg width="16" height="16" viewBox="0 0 16 16" aria-hidden="true">
            <rect width="16" height="16" fill="#2fa9c9" /><path d="M5 3v9.500h6.500V10" fill="none" stroke="#fff" strokeWidth="2" />
          </svg>
        </AppButton>
        <AppButton $mark="#9a98a8" aria-label="Zoom">
          <svg width="16" height="16" viewBox="0 0 16 16" aria-hidden="true">
            <circle cx="8" cy="8" r="8" fill="#0b5cff" /><Tag x="8" y="9.500" fontSize="4.500" textAnchor="middle" fill="#fff">zoom</Tag>
          </svg>
        </AppButton>
      </Apps>
      <Clock>01:02 a. m.<br />01/03/2023</Clock>
    </Taskbar>
  </>
);

export default function App() {
  return (
    <Shell>
      <Global />
      <TopArea>
        <TitleBar>
          <TitleLeft>
            <ExcelLogo size={12} />
            <AutoSave>Autoguardado<Toggle type="checkbox" /></AutoSave>
            <Svg w={12} h={12}><path d="M.5.5h11v11H2L.5 10zM3 .5v4h6v-4M3 11.500v-4h6v4" /></Svg>
            <DocName>Libro1 &nbsp;-&nbsp; Excel</DocName>
          </TitleLeft>
          <SearchBox>
            <Svg w={10} h={10}><circle cx="6" cy="4" r="3.300" /><path d="M3.500 6.500L.5 9.500" /></Svg>
            <SearchInput placeholder="Buscar" aria-label="Buscar" />
          </SearchBox>
          <TitleRight>
            <span>Rubén Ernesto Hernández Uribe</span>
            <WindowButton $w={30} aria-label="Cuenta">
              <svg width="16" height="16" viewBox="0 0 16 16" aria-hidden="true">
                <circle cx="8" cy="8" r="8" fill="#f2f2f2" /><circle cx="8.500" cy="4.500" r="2.500" fill="#7a5646" />
                <path d="M6 3.500a2.500 2 0 0 1 5 0zM1 12l4.500-4L8 11l3-3 3.500 3.500a8 8 0 0 1-13.500.5z" fill="#15151c" />
              </svg>
            </WindowButton>
            <WindowButton $w={32} aria-label="Lápiz"><Svg w={12} h={12}><path d="M1 11.500l1.500-6L7 2.500l2.500 3-3 4zM1 11.500l4-5M7 2.500L8.500.8M9.500 5.500L11.500 3M9.500 2.500l1.500-1.500" /></Svg></WindowButton>
            <WindowButton $w={32} aria-label="Minimizar"><Svg w={8} h={8}><path d="M0 4.500h8" /></Svg></WindowButton>
            <WindowButton $w={32} aria-label="Restaurar"><Svg w={8} h={8}><path d="M.5 2.500h5v5h-5zM2.500.5h4l1 1v4" /></Svg></WindowButton>
            <WindowButton $w={32} aria-label="Cerrar"><Svg w={8} h={8}><path d="M.5.5l7 7M7.500.5l-7 7" /></Svg></WindowButton>
          </TitleRight>
        </TitleBar>
        <TabRow>
          {tabs.map((t) => (
            <RibbonTab key={t.name} $w={t.w} $active={t.kind === "active"} $green={t.kind === "green"}>{t.name}</RibbonTab>
          ))}
          <Spacer />
          <CommentsButton><Svg w={8} h={8}><path d="M.5.5h7v5H4L2 7.500v-2H.5z" /></Svg>Comentarios</CommentsButton>
          <ShareButton><Svg w={8} h={8}><path d="M3 2.500H.5v5h6v-2M2.500 5c.5-2 2-2.500 4-2.500M5 .5l2.500 2L5 4.500" /></Svg>Compartir<IconSlot><Chevron /></IconSlot></ShareButton>
        </TabRow>
      </TopArea>
      <Ribbon />
      <FormulaRow>
        <Field $w={68}>
          <FieldInput aria-label="Cuadro de nombres" defaultValue="2 Marcad..." />
          <Chevron size={7} />
        </Field>
        <Dots><Svg w={2} h={8}><path d="M1 0v8" strokeDasharray="1.500 1.500" /></Svg></Dots>
        <Field $w={49}>
          <IconButton $w={10} $dim aria-label="Cancelar"><Svg w={8} h={8}><path d="M.5.5l7 7M7.500.5l-7 7" /></Svg></IconButton>
          <IconButton $w={19} $dim aria-label="Introducir"><Svg w={10} h={8}><path d="M.5 4.500l3 3 6-7" /></Svg></IconButton>
          <IconButton $w={11} aria-label="Insertar función"><Glyph $size={12} $italic $bold $serif>fx</Glyph></IconButton>
        </Field>
        <Field>
          <FieldInput aria-label="Barra de fórmulas" />
          <Chevron size={7} />
        </Field>
      </FormulaRow>
      <Worksheet />
      <Bottom />
    </Shell>
  );
}
